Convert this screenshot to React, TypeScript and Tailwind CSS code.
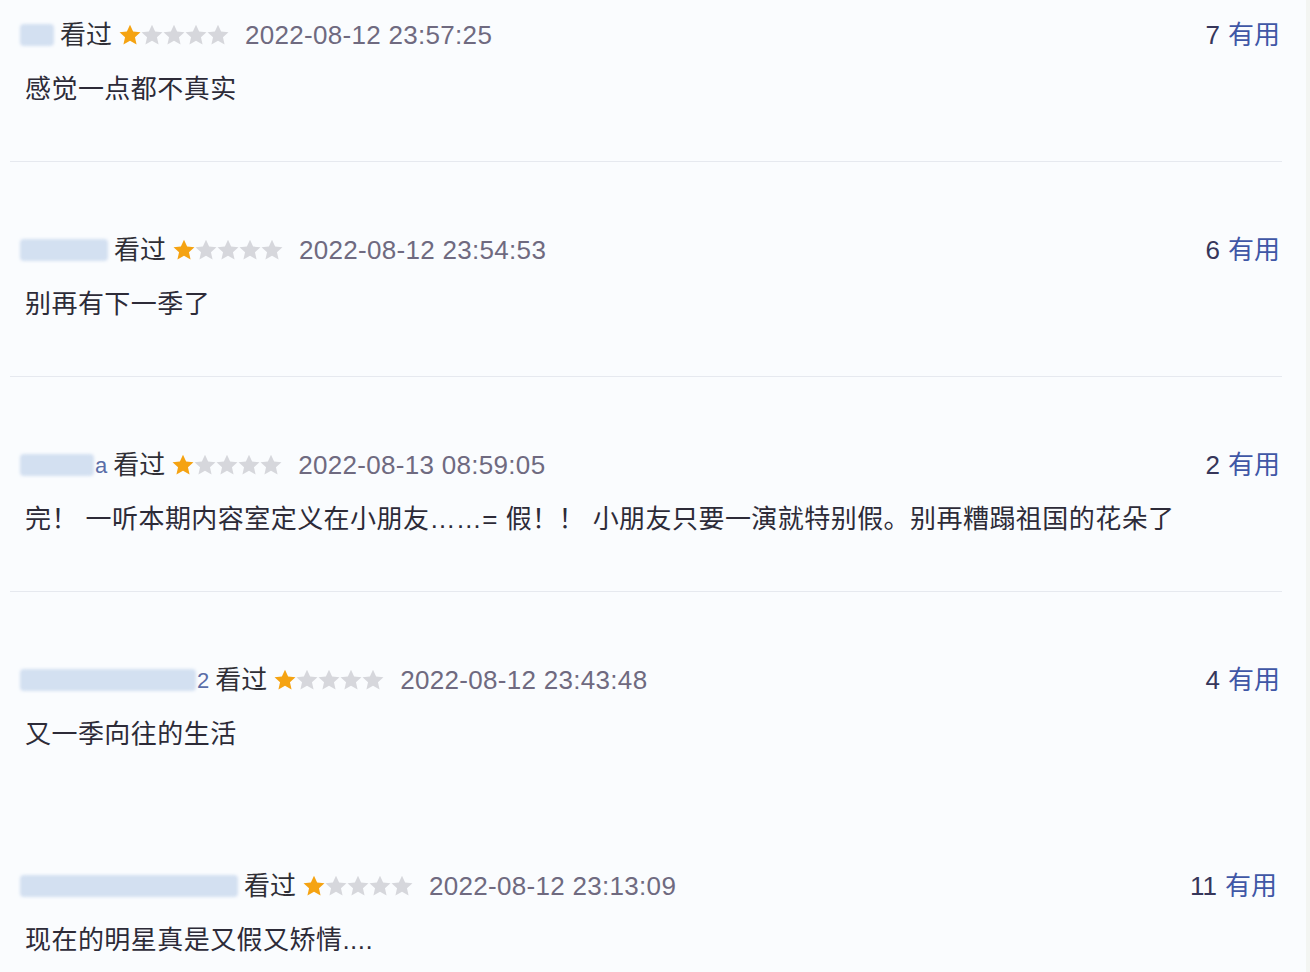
import React from 'react';

type Review = {
  blur: number; // width of blurred username block
  suffix?: string;
  date: string;
  votes: number;
  text: string;
  divider: boolean;
  pt: string;
  pb: string;
};

const reviews: Review[] = [
  { blur: 34, date: '2022-08-12 23:57:25', votes: 7, text: '感觉一点都不真实', divider: true, pt: 'pt-[17px]', pb: 'pb-[54px]' },
  { blur: 88, date: '2022-08-12 23:54:53', votes: 6, text: '别再有下一季了', divider: true, pt: 'pt-[70px]', pb: 'pb-[54px]' },
  {
    blur: 74,
    suffix: 'a',
    date: '2022-08-13 08:59:05',
    votes: 2,
    text: '完！ 一听本期内容室定义在小朋友……= 假！！ 小朋友只要一演就特别假。别再糟蹋祖国的花朵了',
    divider: true,
    pt: 'pt-[70px]',
    pb: 'pb-[54px]',
  },
  { blur: 176, suffix: '2', date: '2022-08-12 23:43:48', votes: 4, text: '又一季向往的生活', divider: false, pt: 'pt-[70px]', pb: 'pb-[116px]' },
  { blur: 218, date: '2022-08-12 23:13:09', votes: 11, text: '现在的明星真是又假又矫情....', divider: false, pt: 'pt-0', pb: 'pb-0' },
];

function Star({ on }: { on: boolean }) {
  return (
    <svg width="22" height="22" viewBox="1.8 2 20.4 20">
      <path
        d="M12 2.5l2.9 6.3 6.8.7-5.1 4.6 1.5 6.8L12 17.4l-6.1 3.5 1.5-6.8-5.1-4.6 6.8-.7z"
        fill={on ? '#f5a312' : '#d6d7dc'}
      />
    </svg>
  );
}

function Row({ r, last }: { r: Review; last: boolean }) {
  return (
    <div>
      <div className={`${r.pt} ${r.pb}`}>
        <div className={`flex items-center justify-between h-9 ${last ? 'pr-[3px]' : ''}`}>
          <div className="flex items-center">
            <div className="flex items-center h-9">
              <div
                className="h-[22px] bg-[#d3e0f1] blur-[1.5px] rounded-sm"
                style={{ width: r.blur }}
              />
              {r.suffix && <span className="text-[22px] text-[#5a6ea8] ml-[1px]">{r.suffix}</span>}
            </div>
            <span className="ml-[6px] text-[26px] text-[#2f2f36]">看过</span>
            <div className="flex items-center ml-[7px]">
              {[0, 1, 2, 3, 4].map((i) => (
                <Star key={i} on={i === 0} />
              ))}
            </div>
            <span className="ml-[16px] text-[26px] text-[#6f6a80] tracking-[0.3px]">{r.date}</span>
          </div>
          <div className="flex items-center text-[26px]">
            <span className="text-[#36365a]">{r.votes}</span>
            <span className="ml-[8px] text-[#3f57a6]">有用</span>
          </div>
        </div>
        <div className="mt-[18px] h-9 flex items-center pl-[5px] text-[26px] text-[#2d2b38] tracking-[0.45px] whitespace-nowrap">
          {r.text}
        </div>
      </div>
      {r.divider && <div className="-ml-[10px] mr-[-2px] h-px bg-[#e6e9ef]" />}
    </div>
  );
}

export default function App() {
  return (
    <div
      className="w-[1310px] h-[972px] overflow-hidden bg-[#fafcfe] border-r-[4px] border-[#f3f5f2]"
      style={{ fontFamily: '"Liberation Sans", "Noto Sans CJK SC", sans-serif' }}
    >
      <div className="pl-[20px] pr-[26px]">
        {reviews.map((r, i) => (
          <Row key={i} r={r} last={i === reviews.length - 1} />
        ))}
      </div>
    </div>
  );
}
